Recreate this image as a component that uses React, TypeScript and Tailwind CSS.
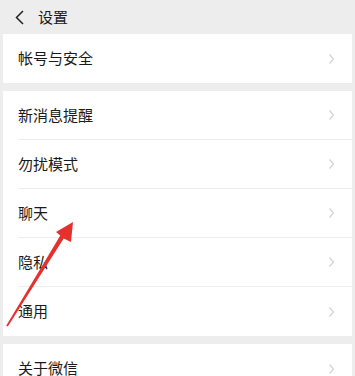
const font = { fontFamily: '"Noto Sans CJK SC", "Noto Sans", sans-serif' };

function Chevron() {
  return (
    <svg width="7" height="12" viewBox="0 0 7 12" className="shrink-0">
      <polyline points="1.5,1.5 5.5,6 1.5,10.5" fill="none" stroke="#d2d2d2" strokeWidth="1.2" />
    </svg>
  );
}

function Row({ label, last = false }: { label: string; last?: boolean }) {
  return (
    <div className="flex h-[49px] items-center pl-[15px]">
      <div
        className={`flex h-full flex-1 items-center justify-between pr-[17px] ${
          last ? "" : "border-b border-[#ededed]"
        }`}
      >
        <span className="text-[15px] text-[#1a1a1a]">{label}</span>
        <Chevron />
      </div>
    </div>
  );
}

const groups = [["帐号与安全"], ["新消息提醒", "勿扰模式", "聊天", "隐私", "通用"], ["关于微信"]];

export default function App() {
  return (
    <div className="relative h-[376px] w-[355px] overflow-hidden bg-[#ededed]" style={font}>
      <div className="flex h-[34px] items-center pl-[15px]">
        <svg width="9" height="15" viewBox="0 0 9 15">
          <polyline points="8,1 1.5,7.5 8,14" fill="none" stroke="#222" strokeWidth="1.5" />
        </svg>
        <span className="ml-[14px] text-[15px] text-[#1a1a1a]">设置</span>
      </div>
      <div className="flex flex-col gap-[8px] px-[3px]">
        {groups.map((g, i) => (
          <div key={i} className="bg-white">
            {g.map((label, j) => (
              <Row key={label} label={label} last={j === g.length - 1} />
            ))}
          </div>
        ))}
      </div>
      <svg className="pointer-events-none absolute left-0 top-0" width="355" height="376">
        <polygon
          points="56,232 73,222 71,242 63.7,238.5 7.8,326.5 6.2,325.8 60.3,235.5"
          fill="#e5312e"
        />
      </svg>
    </div>
  );
}
